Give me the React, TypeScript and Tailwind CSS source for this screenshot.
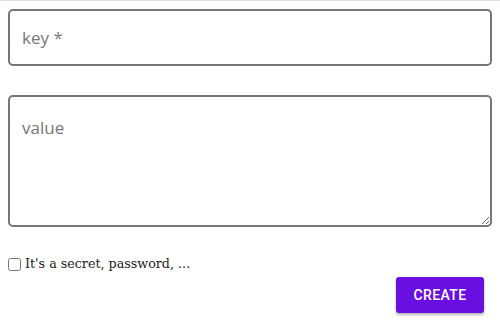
import React, { useState } from 'react';

const App: React.FC = () => {
  const [key, setKey] = useState('');
  const [value, setValue] = useState('');
  const [secret, setSecret] = useState(false);

  return (
    <div className="w-[500px] h-[326px] bg-white border-t border-[#e0e0e0] font-['Open_Sans',sans-serif]">
      <div className="flex flex-col px-2 pt-2">
        <input
          value={key}
          onChange={(e) => setKey(e.target.value)}
          placeholder="key *"
          className="h-[57px] w-full rounded-[5px] border-2 border-[#777777] px-3 text-[17px] text-[#333] placeholder:text-[#777777] outline-none"
        />
        <textarea
          value={value}
          onChange={(e) => setValue(e.target.value)}
          placeholder="value"
          className="mt-[29px] h-[132px] w-full rounded-[5px] border-2 border-[#777777] px-3 pt-[18px] text-[17px] text-[#333] placeholder:text-[#777777] outline-none"
        />
        <label className="mt-[27px] flex h-5 items-center gap-[4px] font-['DejaVu_Serif',serif] text-[12.7px] text-[#222]">
          <input
            type="checkbox"
            checked={secret}
            onChange={(e) => setSecret(e.target.checked)}
            className="m-0 h-[13px] w-[13px]"
          />
          <span>It's a secret, password, ...</span>
        </label>
        <div className="mt-[3px] flex justify-end pr-2">
          <button className="h-9 w-[88px] rounded-[3px] bg-[#6a0fe2] font-['Roboto',sans-serif] text-[14px] font-medium tracking-[0.4px] text-white shadow-[0_2px_3px_rgba(0,0,0,0.3)]">
            CREATE
          </button>
        </div>
      </div>
    </div>
  );
};

export default App;
